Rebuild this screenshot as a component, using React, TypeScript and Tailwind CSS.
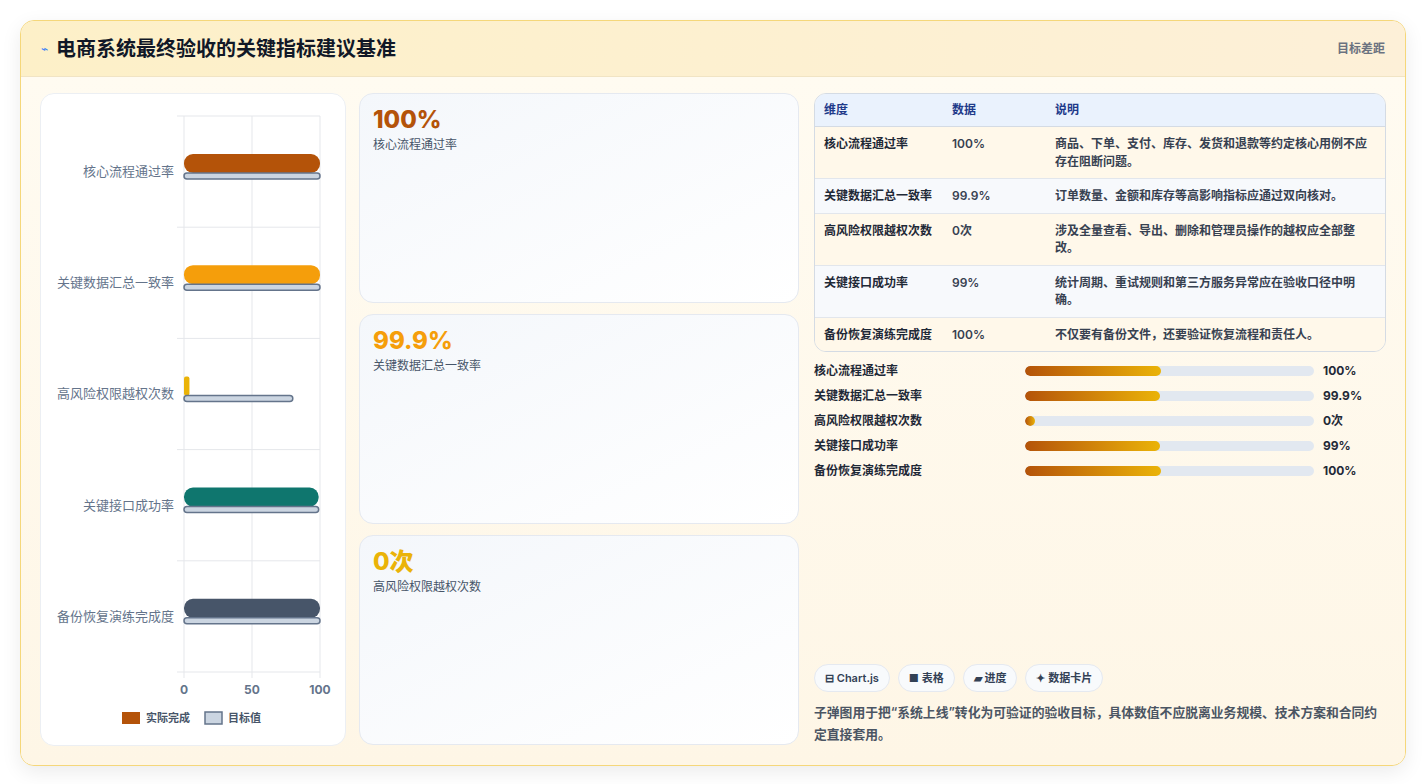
import React from "react";

const rows = [
  { name: "核心流程通过率", val: "100%", desc: "商品、下单、支付、库存、发货和退款等约定核心用例不应存在阻断问题。", a: 100, t: 100, c: "#b45309", p: 47 },
  { name: "关键数据汇总一致率", val: "99.9%", desc: "订单数量、金额和库存等高影响指标应通过双向核对。", a: 100, t: 100, c: "#f59e0b", p: 46.8 },
  { name: "高风险权限越权次数", val: "0次", desc: "涉及全量查看、导出、删除和管理员操作的越权应全部整改。", a: 4, t: 80, c: "#eab308", p: 0 },
  { name: "关键接口成功率", val: "99%", desc: "统计周期、重试规则和第三方服务异常应在验收口径中明确。", a: 99, t: 99, c: "#0f766e", p: 46.8 },
  { name: "备份恢复演练完成度", val: "100%", desc: "不仅要有备份文件，还要验证恢复流程和责任人。", a: 100, t: 100, c: "#475569", p: 47 },
];

function Chart() {
  const x0 = 143, w = 136, top = 22, band = 111.2;
  const sx = (v: number) => (v / 100) * w;
  return (
    <svg width="305" height="650" viewBox="0 0 305 650" style={{ fontFamily: '"Noto Sans CJK SC", sans-serif' }}>
      {[0, 1, 2, 3, 4, 5].map((i) => (
        <line key={i} x1={136} x2={x0 + w} y1={top + i * band} y2={top + i * band} stroke="#e5e7eb" />
      ))}
      {[0, 50, 100].map((v) => (
        <line key={v} x1={x0 + sx(v)} x2={x0 + sx(v)} y1={top} y2={top + 5 * band + 6} stroke="#e5e7eb" />
      ))}
      {rows.map((r, i) => {
        const cy = top + i * band + 55;
        return (
          <g key={i}>
            <text x={133} y={cy + 5} textAnchor="end" fontSize="13" fill="#64748b">{r.name}</text>
            <rect x={x0} y={cy - 17} width={sx(r.a)} height={19} rx={r.a > 10 ? 9 : 2} fill={r.c} />
            <rect x={x0} y={cy + 2} width={sx(r.t)} height={6} rx={3} fill="#cbd5e1" stroke="#64748b" strokeWidth="1.5" />
          </g>
        );
      })}
      {[0, 50, 100].map((v) => (
        <text key={v} x={x0 + sx(v)} y={600} textAnchor="middle" fontSize="12" fontWeight="700" fill="#64748b" fontFamily="Inter, sans-serif">{v}</text>
      ))}
      <rect x={81} y={618} width={18} height={12} fill="#b45309" />
      <text x={105} y={628} fontSize="11" fontWeight="700" fill="#475569">实际完成</text>
      <rect x={164} y={618} width={17} height={12} fill="#cbd5e1" stroke="#64748b" strokeWidth="1.5" />
      <text x={187} y={628} fontSize="11" fontWeight="700" fill="#475569">目标值</text>
    </svg>
  );
}

const cards = [
  { v: "100%", l: "核心流程通过率", c: "text-[#b45309]" },
  { v: "99.9%", l: "关键数据汇总一致率", c: "text-[#f59e0b]" },
  { v: "0次", l: "高风险权限越权次数", c: "text-[#eab308]" },
];

export default function App() {
  return (
    <div className="min-h-[784px] bg-white p-[20px] pb-[19px]" style={{ fontFamily: 'Inter, "Noto Sans CJK SC", sans-serif' }}>
      <div className="rounded-[14px] border border-[#f5d77a] bg-[#fff8ea] shadow-[0_6px_20px_rgba(0,0,0,0.08)] overflow-hidden">
        <div className="h-[56px] flex items-center justify-between px-[20px] bg-gradient-to-r from-[#fdf0c8] to-[#fdf0d8] border-b border-[#f1e4c4]">
          <div className="flex items-center gap-[8px]">
            <span className="text-[#3b82f6] text-[12px]">⌁</span>
            <span className="text-[20px] font-bold text-[#111827]">电商系统最终验收的关键指标建议基准</span>
          </div>
          <span className="text-[12px] font-semibold text-[#6b7280]">目标差距</span>
        </div>
        <div className="flex p-[19px] pt-[16px] pb-[19px] bg-gradient-to-b from-[#fffbf1] to-[#fef6e6]">
          <div className="w-[306px] h-[653px] rounded-[14px] border border-[#eceff3] bg-white shrink-0">
            <Chart />
          </div>
          <div className="w-[440px] ml-[13px] flex flex-col gap-[11px] shrink-0">
            {cards.map((c) => (
              <div key={c.l} className="h-[210px] rounded-[14px] border border-[#e5e9f0] bg-gradient-to-br from-[#f4f7fb] to-white px-[13px] py-[12px]">
                <div className={`text-[24px] font-extrabold leading-[28px] ${c.c}`}>{c.v}</div>
                <div className="text-[12px] text-[#475569] mt-[2px]">{c.l}</div>
              </div>
            ))}
          </div>
          <div className="flex-1 flex flex-col ml-[15px]">
            <div className="rounded-[12px] border border-[#d4dbe4] overflow-hidden text-[12px] text-[#1f2937]">
              <div className="flex h-[33px] items-center bg-[#eaf2fd] border-b border-[#d4dbe4] font-semibold text-[#1e3a8a]">
                <div className="w-[137px] pl-[9px]">维度</div>
                <div className="w-[103px]">数据</div>
                <div className="flex-1">说明</div>
              </div>
              {rows.map((r, i) => (
                <div key={r.name} className={`flex py-[8px] leading-[17.5px] ${i % 2 ? "bg-[#f7f9fc]" : "bg-[#fff8ea]"} ${i < 4 ? "border-b border-[#e2e6ec]" : ""}`}>
                  <div className="w-[137px] pl-[9px] font-semibold">{r.name}</div>
                  <div className="w-[103px] font-semibold text-[#374151]">{r.val}</div>
                  <div className="flex-1 pr-[10px] font-semibold text-[#374151]">{r.desc}</div>
                </div>
              ))}
            </div>
            <div className="mt-[10px] flex flex-col gap-[7px]">
              {rows.map((r) => (
                <div key={r.name} className="flex items-center h-[18px] text-[12px] font-semibold text-[#1f2937]">
                  <div className="w-[211px]">{r.name}</div>
                  <div className="w-[289px] h-[10px] rounded-full bg-[#e2e8f0] overflow-hidden">
                    <div className="h-full rounded-full bg-gradient-to-r from-[#b45309] to-[#eab308]" style={{ width: r.p ? `${r.p}%` : "10px" }} />
                  </div>
                  <div className="ml-[9px] font-bold">{r.val}</div>
                </div>
              ))}
            </div>
            <div className="flex-1" />
            <div className="flex gap-[8px] text-[11px] font-semibold text-[#334155]">
              <span className="h-[28px] px-[10px] rounded-full border border-[#e5e9f0] bg-[#f8fafc] flex items-center">⊟ Chart.js</span>
              <span className="h-[28px] px-[10px] rounded-full border border-[#e5e9f0] bg-[#f8fafc] flex items-center">■ 表格</span>
              <span className="h-[28px] px-[10px] rounded-full border border-[#e5e9f0] bg-[#f8fafc] flex items-center">▰ 进度</span>
              <span className="h-[28px] px-[10px] rounded-full border border-[#e5e9f0] bg-[#f8fafc] flex items-center">✦ 数据卡片</span>
            </div>
            <p className="mt-[10px] text-[12.8px] leading-[22px] font-semibold text-[#4b5563]">子弹图用于把“系统上线”转化为可验证的验收目标，具体数值不应脱离业务规模、技术方案和合同约定直接套用。</p>
          </div>
        </div>
      </div>
    </div>
  );
}
